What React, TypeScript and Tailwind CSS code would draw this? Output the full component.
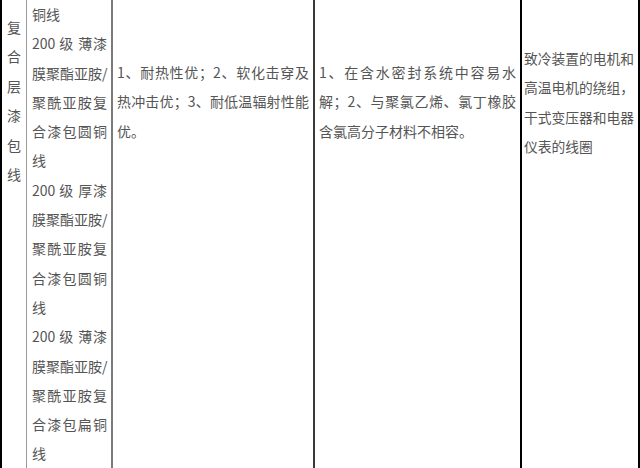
const font = { fontFamily: '"Noto Sans CJK SC", "Noto Sans", sans-serif' }

const wireLines: { text: string; full: boolean }[] = [
  { text: '铜线', full: false },
  { text: '200 级 薄漆', full: true },
  { text: '膜聚酯亚胺/', full: true },
  { text: '聚酰亚胺复', full: true },
  { text: '合漆包圆铜', full: true },
  { text: '线', full: false },
  { text: '200 级 厚漆', full: true },
  { text: '膜聚酯亚胺/', full: true },
  { text: '聚酰亚胺复', full: true },
  { text: '合漆包圆铜', full: true },
  { text: '线', full: false },
  { text: '200 级 薄漆', full: true },
  { text: '膜聚酯亚胺/', full: true },
  { text: '聚酰亚胺复', full: true },
  { text: '合漆包扁铜', full: true },
  { text: '线', full: false },
]

const Lines = ({ lines }: { lines: { text: string; full: boolean }[] }) => (
  <>
    {lines.map((l, i) => (
      <div key={i} className={l.full ? 'whitespace-nowrap text-justify [text-align-last:justify]' : 'whitespace-nowrap'}>
        {l.text}
      </div>
    ))}
  </>
)

export default function App() {
  return (
    <div className="flex h-[468px] w-[640px] overflow-hidden border-l-2 border-black bg-white text-[14px] text-[#555]" style={font}>
      <div className="flex w-[25px] shrink-0 flex-col items-center border-r border-[#9a9a9a] pt-[13px] leading-[29.4px]">
        {['复', '合', '层', '漆', '包', '线'].map((c) => (
          <div key={c}>{c}</div>
        ))}
      </div>

      <div className="w-[86px] shrink-0 border-r-2 border-[#7a7a7a] pl-[5px] pr-[4px] leading-[29.3px]">
        <Lines lines={wireLines} />
      </div>

      <div className="w-[202px] shrink-0 border-r-2 border-[#3a3a3a] px-[4px] pt-[58px] leading-[29.3px]">
        <Lines
          lines={[
            { text: '1、耐热性优；2、软化击穿及', full: true },
            { text: '热冲击优；3、耐低温辐射性能', full: true },
            { text: '优。', full: false },
          ]}
        />
      </div>

      <div className="w-[207px] shrink-0 border-r-2 border-black px-[4px] pt-[58px] leading-[29.3px]">
        <Lines
          lines={[
            { text: '1、在含水密封系统中容易水', full: true },
            { text: '解；2、与聚氯乙烯、氯丁橡胶', full: true },
            { text: '含氯高分子材料不相容。', full: false },
          ]}
        />
      </div>

      <div className="w-[118px] shrink-0 border-r-2 border-black pl-[2px] pt-[44px] text-[13.75px] leading-[29.4px]">
        <Lines
          lines={[
            { text: '致冷装置的电机和', full: false },
            { text: '高温电机的绕组，', full: false },
            { text: '干式变压器和电器', full: false },
            { text: '仪表的线圈', full: false },
          ]}
        />
      </div>
    </div>
  )
}
